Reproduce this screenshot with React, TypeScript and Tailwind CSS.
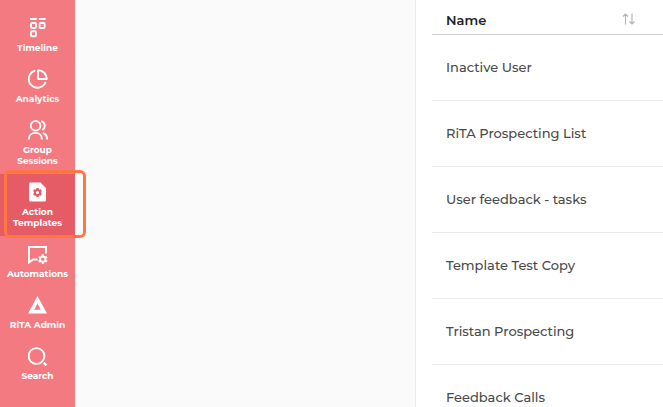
import type { ReactNode } from "react";

function Icon({ children }: { children: ReactNode }) {
  return (
    <svg
      viewBox="0 0 20 20"
      className="h-5 w-5 shrink-0"
      fill="none"
      stroke="currentColor"
      strokeWidth={1.9}
      aria-hidden="true"
    >
      {children}
    </svg>
  );
}

const TimelineIcon = () => (
  <Icon>
    <path d="M2 1h6.8M10.8 1h6.8" />
    <rect x="3" y="5" width="5" height="5" rx="1" />
    <rect x="11.6" y="5" width="5" height="5" rx="1" />
    <rect x="3" y="13.2" width="5" height="5" rx="1" />
  </Icon>
);

const AnalyticsIcon = () => (
  <Icon>
    <path d="M7.2 1.6A8.7 8.7 0 1 0 17.6 13" />
    <path d="M10 1.2v8.8h8.8A8.8 8.8 0 0 0 10 1.2z" strokeLinejoin="round" />
  </Icon>
);

const GroupIcon = () => (
  <Icon>
    <circle cx="7.6" cy="5.8" r="4.8" />
    <path d="M.9 19.5v-.6c0-3.5 2.8-6 6.5-6s6.5 2.5 6.5 6v.6" />
    <path d="M13.3 1.2a4.8 4.8 0 0 1 1 8.8M14.8 13.2c2.5.7 4.3 2.8 4.3 5.7v.6" />
  </Icon>
);

const TemplateIcon = () => (
  <Icon>
    <path
      d="M2.5.5h10l5.5 5.5v12a1.500 1.500 0 0 1-1.500 1.500h-14A1.500 1.500 0 0 1 1 18V2A1.500 1.500 0 0 1 2.500.5z"
      fill="currentColor"
      stroke="none"
    />
    <g className="stroke-[#e65c66]">
      <circle cx="9.5" cy="10.500" r="2.600" strokeWidth={2} />
      <path
        d="M9.5 6v2M9.500 13v2M5.600 8.200l1.700 1M11.700 11.800l1.700 1M5.600 12.800l1.700-1M11.700 9.200l1.700-1"
        strokeWidth={2.4}
      />
    </g>
  </Icon>
);

const AutomationsIcon = () => (
  <Icon>
    <path d="M18 9.500V3H1v15.500l4-3h4.500" />
    <circle cx="14.800" cy="15.200" r="2.700" strokeWidth={1.8} />
    <path
      d="M14.800 10.300v2M14.800 18v2M10.600 12.800l1.700 1M17.300 16.600l1.700 1M10.600 17.600l1.700-1M17.300 13.800l1.700-1"
      strokeWidth={2}
    />
  </Icon>
);

const AdminIcon = () => (
  <Icon>
    <path
      d="M9.5 1 19 18.500H0zM9.500 8.500 6.200 14.800h6.600z"
      fill="currentColor"
      fillRule="evenodd"
      stroke="none"
    />
  </Icon>
);

const SearchIcon = () => (
  <Icon>
    <circle cx="8.500" cy="10" r="7.900" />
    <path d="m15.800 16.800 2.600 2.600" strokeWidth={2.4} />
  </Icon>
);

const navItems = [
  { label: "Timeline", icon: TimelineIcon },
  { label: "Analytics", icon: AnalyticsIcon },
  { label: "Group Sessions", icon: GroupIcon },
  { label: "Action Templates", icon: TemplateIcon, active: true },
  { label: "Automations", icon: AutomationsIcon },
  { label: "RiTA Admin", icon: AdminIcon },
  { label: "Search", icon: SearchIcon },
];

const templates = [
  "Inactive User",
  "RiTA Prospecting List",
  "User feedback - tasks",
  "Template Test Copy",
  "Tristan Prospecting",
  "Feedback Calls",
];

function Sidebar() {
  return (
    <nav className="w-[75px] shrink-0 bg-[#f47a81] pt-2.5">
      {navItems.map(({ label, icon: ItemIcon, active }) => (
        <a
          key={label}
          href="#"
          aria-current={active ? "page" : undefined}
          className={`relative flex flex-col items-center gap-1 px-2 py-2 text-center text-[9px] leading-[11px] font-bold text-white ${active ? "bg-[#e65c66]" : ""}`}
        >
          <ItemIcon />
          <span>{label}</span>
          {active && (
            <span className="absolute -top-1 -right-[11px] -bottom-0.5 left-1 rounded-md border-3 border-[#ff7643]" />
          )}
        </a>
      ))}
    </nav>
  );
}

function TemplateTable() {
  return (
    <table className="w-full border-collapse text-left text-[13px] font-medium text-[#4a4a4a]">
      <thead>
        <tr className="h-[34px] border-b border-[#cfcfcf]">
          <th className="pt-2 pr-[27px] pl-3.5 font-semibold text-[#222]">
            <div className="flex items-center justify-between">
              Name
              <button type="button" aria-label="Sort by name" className="pb-1 text-[#b5b5b5]">
                <svg viewBox="0 0 14 12" className="h-3 w-3.5" fill="none" stroke="currentColor" strokeWidth={1.2}>
                  <path d="M3.5 11.5V1M1 3.5 3.5 1 6 3.5M10 .5V11M7.5 8.5 10 11l2.5-2.5" />
                </svg>
              </button>
            </div>
          </th>
        </tr>
      </thead>
      <tbody>
        {templates.map((name) => (
          <tr key={name} className="h-[66px] border-b border-[#ebebeb]">
            <td className="pt-0.5 pl-3.5">{name}</td>
          </tr>
        ))}
      </tbody>
    </table>
  );
}

export default function App() {
  return (
    <div className="flex h-screen overflow-hidden bg-[#fafafa] font-[Montserrat,Inter,sans-serif]">
      <Sidebar />
      <main className="grid flex-1 grid-cols-[340px_1fr]">
        <section className="col-start-2 border-l border-[#ececec] bg-white pl-4">
          <TemplateTable />
        </section>
      </main>
    </div>
  );
}
